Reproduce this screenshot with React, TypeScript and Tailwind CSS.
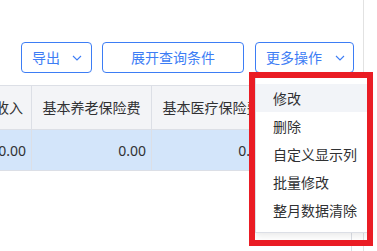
import React from "react";

const Chevron = () => (
  <svg width="10" height="6" viewBox="0 0 10 6" className="shrink-0">
    <polyline points="1,1 5,5 9,1" fill="none" stroke="#3d7df5" strokeWidth="1.1" />
  </svg>
);

const font = { fontFamily: '"Noto Sans", "Noto Sans CJK SC", sans-serif' };

export default function App() {
  const menuItems = ["修改", "删除", "自定义显示列", "批量修改", "整月数据清除"];
  return (
    <div className="relative w-[377px] h-[251px] bg-white overflow-hidden text-[14px]" style={font}>
      <div className="w-[364px] h-full border-r border-[#e2e2e2]">
        <div className="h-[42px]" />
        <div className="flex h-[31px] text-[#3d7df5]">
          <button className="ml-[21px] w-[71px] h-full flex items-center pl-[10px] pr-[9px] justify-between border border-[#3d7df5] rounded-[4px] bg-white">
            <span>导出</span>
            <Chevron />
          </button>
          <button className="ml-[10px] w-[142px] h-full flex items-center justify-center border border-[#3d7df5] rounded-[4px] bg-white">
            <span>展开查询条件</span>
          </button>
          <button className="ml-[11px] w-[99px] h-full flex items-center pl-[10px] pr-[8px] justify-between border border-[#3d7df5] rounded-[4px] bg-white">
            <span>更多操作</span>
            <Chevron />
          </button>
        </div>
        <div className="mt-[12px] text-[#303133]">
          <div className="flex h-[45px] bg-[#f3f4f7] border-t border-b border-[#dcdfe6]">
            <div className="w-[32px] shrink-0 flex items-center justify-end pr-[8px] overflow-hidden whitespace-nowrap border-r border-[#dcdfe6]">
              <span>收入</span>
            </div>
            <div className="w-[120px] shrink-0 flex items-center justify-center whitespace-nowrap border-r border-[#dcdfe6]">
              基本养老保险费
            </div>
            <div className="w-[120px] shrink-0 flex items-center justify-center whitespace-nowrap border-r border-[#dcdfe6]">
              基本医疗保险费
            </div>
            <div className="w-[120px] shrink-0 border-r border-[#dcdfe6]" />
          </div>
          <div className="flex h-[41px] bg-[#d3e5fa] border-b border-[#dcdfe6]">
            <div className="w-[32px] shrink-0 flex items-center justify-end pr-[5px] overflow-hidden whitespace-nowrap border-r border-[#dcdfe6]">
              0.00
            </div>
            <div className="w-[120px] shrink-0 flex items-center justify-end pr-[5px] border-r border-[#dcdfe6]">
              0.00
            </div>
            <div className="w-[120px] shrink-0 flex items-center justify-end pr-[5px] border-r border-[#dcdfe6]">
              0.00
            </div>
            <div className="w-[120px] shrink-0 border-r border-[#dcdfe6]" />
          </div>
        </div>
      </div>

      <div className="absolute left-[351px] top-[229px] w-px h-[22px] bg-[#dcdfe6]" />

      <div className="absolute left-[255px] top-[76px] w-[114px] h-[157px] bg-white border border-[#dcdfe6] shadow-[0_2px_8px_rgba(0,0,0,0.1)] pt-[7px] text-[#303133]">
        {menuItems.map((t, i) => (
          <div
            key={t}
            className={`h-[28px] flex items-center pl-[17px] whitespace-nowrap ${i === 0 ? "bg-[#f2f4f8]" : ""}`}
          >
            {t}
          </div>
        ))}
      </div>

      <div className="absolute left-[249px] top-[72px] w-[124px] h-[174px] border-[6px] border-[#ea1c24]" />
    </div>
  );
}
